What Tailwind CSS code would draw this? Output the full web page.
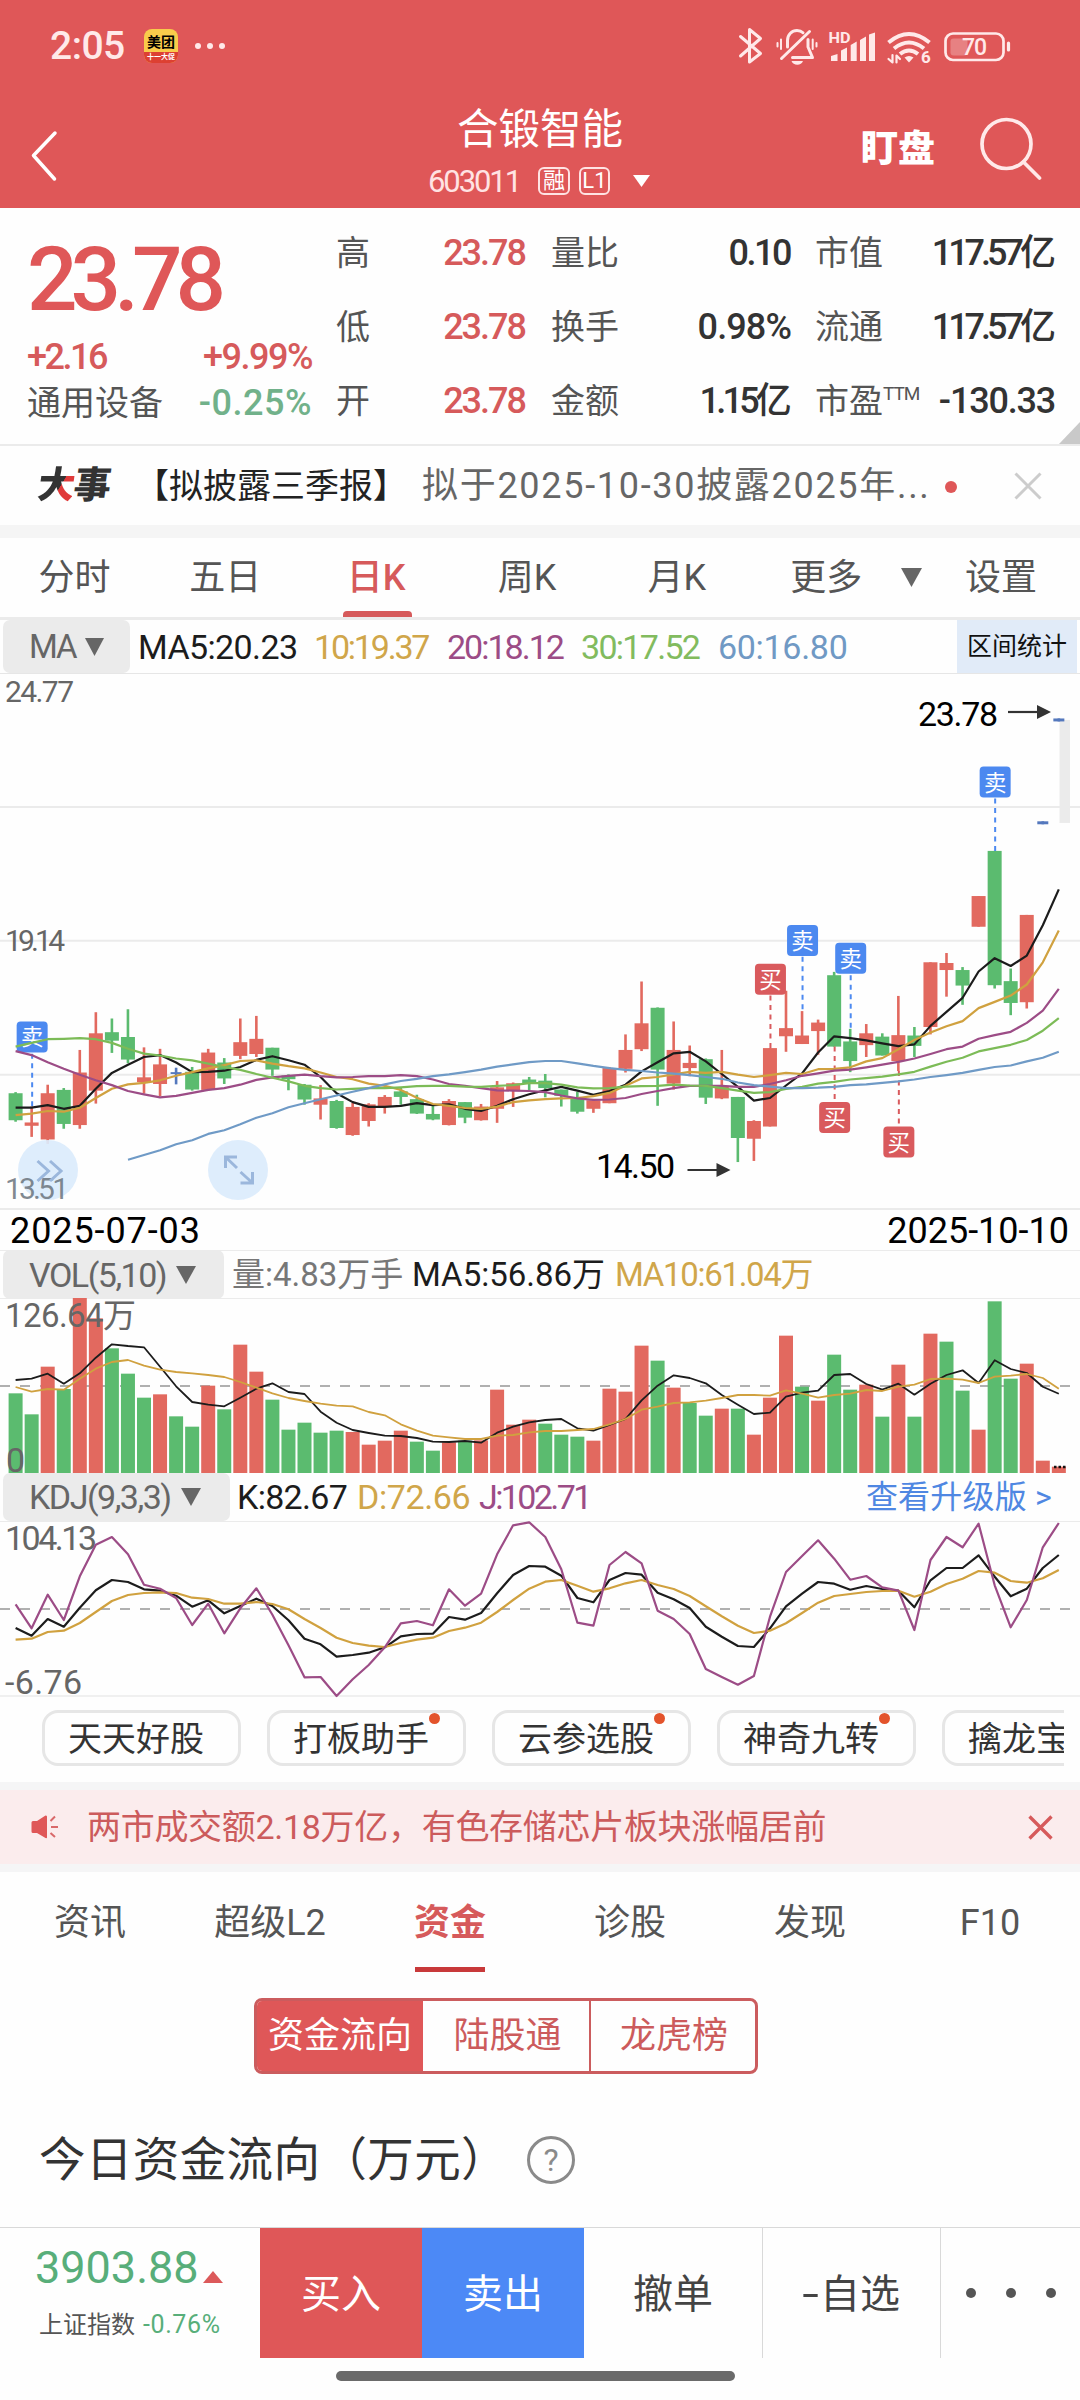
<!DOCTYPE html>
<html lang="zh-CN">
<head>
<meta charset="utf-8">
<title>合锻智能 603011</title>
<script src="https://cdn.jsdelivr.net/npm/@tailwindcss/browser@4"></script>
</head>
<body class="w-[1080px] h-[2400px] overflow-hidden bg-[#fefefe] text-[#555] font-['Roboto','Noto_Sans_CJK_SC',sans-serif] leading-none whitespace-nowrap">

<header class="h-[208px] bg-[#df5758] text-white">
  <div class="flex h-[92px] items-center pl-[50px] pr-[68px] text-[#ffe9e9]">
    <span class="w-[94px] text-[39px] font-medium tracking-[-0.5px]">2:05</span>
    <div class="flex h-[34px] w-[34px] flex-col overflow-hidden rounded-[8px] bg-[#f9cb4b] text-center">
      <span class="h-[23px] pt-[6px] text-[14px] font-bold text-black">美团</span>
      <span class="h-[11px] bg-[#dd4032] pt-[2px] text-[7px] font-bold text-white">十一大促</span>
    </div>
    <div class="ml-[17px] flex gap-[6px]">
      <i class="size-[6px] rounded-full bg-[#ffe9e9]"></i><i class="size-[6px] rounded-full bg-[#ffe9e9]"></i><i class="size-[6px] rounded-full bg-[#ffe9e9]"></i>
    </div>
    <svg class="ml-auto h-[40px] w-[277px]" viewBox="735 25 277 40" fill="none" stroke="#ffe9e9" stroke-width="3" stroke-linecap="round" stroke-linejoin="round">
      <path d="M740.5 35.5 760.5 52.5 749.5 61V28.5L760.5 37.5 740.5 55"/>
      <path d="M787.5 46v-6.500c0-6 4.500-10 9.500-10 2.500 0 4.600.8 6 2.200M781.500 57.500 809.500 30.500M808 38.500v7.500l4.500 10.500H792.500"/>
      <path d="M777.500 42v3.500M781 38.500v9.500M812.700 38.500v9.500M816.500 42v3.500" stroke-width="2"/>
      <path d="M791.500 60h11.500c-1 2.500-3 3.700-5.700 3.700s-4.800-1.200-5.800-3.700z" fill="#ffe9e9" stroke="none"/>
      <g fill="#ffe9e9" stroke="none">
        <path d="M831 55l6.500-2v7h-6.500zM841 49.500l6-3v13.500h-6zM850.700 44l6-3.500v19.500h-6zM860 39l6-3.500v24.500h-6zM869 33.500l6-2v28.500h-6z"/>
        <text x="828.500" y="41.500" font-size="15" font-weight="700" textLength="22" lengthAdjust="spacingAndGlyphs">HD</text>
        <path d="M904.500 56.500q4.500-3 9 0l-4.500 5z"/>
        <text x="921" y="62" font-size="17" font-weight="700">6</text>
      </g>
      <g stroke-width="4" stroke-linecap="butt">
        <path d="M888.500 41.500q20.500-17 41 0M894 47.500q15-12 30 0M900 53q9-7 18 0"/>
      </g>
      <path d="M892.500 54v7.500l-4-3.500M896.500 61.500v-7l3.500 3.500" stroke-width="2.200"/>
      <rect x="945.500" y="32.500" width="58" height="26.500" rx="7.500" stroke-width="2.700"/>
      <rect x="950.500" y="37.500" width="17" height="17" rx="3" fill="#fff" fill-opacity=".25" stroke="none"/>
      <path d="M1008.500 42v7" stroke-width="3.200"/>
      <text x="962" y="53.500" font-size="23" font-weight="500" fill="#ffe9e9" stroke="none" textLength="25">70</text>
    </svg>
  </div>
  <div class="flex h-[116px] justify-between pl-[30px] pr-[38px]">
    <svg class="mt-[38px] h-[52px] w-[320px]" viewBox="0 0 320 52" fill="none" stroke="#fff" stroke-width="3.500" stroke-linecap="round" stroke-linejoin="round"><path d="M25 3 3.500 25.500 24.500 49"/></svg>
    <div class="flex w-[380px] flex-col items-center pt-[17px]">
      <h1 class="text-[41.500px] leading-[42px]">合锻智能</h1>
      <div class="mt-[16px] flex h-[28px] items-center pr-[2px]">
        <span class="text-[31px] tracking-[-2.1px] text-[#ffe3e3]">603011</span>
        <span class="ml-[18px] flex h-[28px] w-[32px] items-center justify-center rounded-[6px] border-2 border-[#ffe3e3] text-[22px]">融</span>
        <span class="ml-[9px] flex h-[28px] w-[31px] items-center justify-center rounded-[6px] border-2 border-[#ffe3e3] text-[22px]">L1</span>
        <svg class="ml-[23px] h-[12px] w-[17px]" viewBox="0 0 17 12" fill="#fff"><path d="M0 0h17L8.500 12z"/></svg>
      </div>
    </div>
    <div class="flex w-[312px] justify-end pt-[25px]">
      <span class="mt-[14px] text-[37px] font-black">盯盘</span>
      <svg class="ml-[45px] h-[64px] w-[62px]" viewBox="980 117 62 64" fill="none" stroke="#ffe9e9" stroke-width="3.700" stroke-linecap="round"><circle cx="1006.500" cy="144" r="24.500"/><path d="M1023.500 162 1039.500 178"/></svg>
    </div>
  </div>
</header>

<section class="relative flex h-[238px] border-b-2 border-[#ebebeb] pl-[27px] pr-[26px]">
  <div class="w-[285px] pt-[24px]">
    <div class="text-[89px] font-medium leading-[96px] tracking-[-7px] text-[#df5758]">23.78</div>
    <div class="mt-[9px] flex h-[40px] items-center justify-between text-[36px] font-medium text-[#d65a5b]"><span class="tracking-[-2.500px]">+2.16</span><span class="tracking-[-1.500px]">+9.99%</span></div>
    <div class="mt-[6px] flex h-[40px] items-center justify-between text-[34px]"><span>通用设备</span><span class="text-[36px] font-medium tracking-[0.500px] text-[#71b18a]">-0.25%</span></div>
  </div>
  <div class="ml-[24px] w-[191px] pt-[8px]">
    <div class="flex h-[74px] items-center justify-between text-[34px]">高<b class="mr-[2px] text-[36px] font-medium tracking-[-2px] text-[#d65a5b]">23.78</b></div>
    <div class="flex h-[74px] items-center justify-between text-[34px]">低<b class="mr-[2px] text-[36px] font-medium tracking-[-2px] text-[#d65a5b]">23.78</b></div>
    <div class="flex h-[74px] items-center justify-between text-[34px]">开<b class="mr-[2px] text-[36px] font-medium tracking-[-2px] text-[#d65a5b]">23.78</b></div>
  </div>
  <div class="ml-[24px] w-[240px] pt-[8px]">
    <div class="flex h-[74px] items-center justify-between text-[34px]">量比<b class="mr-[1px] text-[36px] font-medium tracking-[-2.500px] text-[#333]">0.10</b></div>
    <div class="flex h-[74px] items-center justify-between text-[34px]">换手<b class="text-[36px] font-medium tracking-[-0.900px] text-[#333]">0.98%</b></div>
    <div class="flex h-[74px] items-center justify-between text-[34px]">金额<b class="mr-[3px] text-[36px] font-medium tracking-[-3.800px] text-[#333]">1.15亿</b></div>
  </div>
  <div class="ml-[24px] w-[239px] pt-[8px]">
    <div class="flex h-[74px] items-center justify-between text-[34px]">市值<b class="mr-[2px] text-[36px] font-medium tracking-[-4px] text-[#333]">117.57亿</b></div>
    <div class="flex h-[74px] items-center justify-between text-[34px]">流通<b class="mr-[2px] text-[36px] font-medium tracking-[-4px] text-[#333]">117.57亿</b></div>
    <div class="flex h-[74px] items-center justify-between text-[34px]"><span class="flex">市盈<i class="text-[19px] not-italic tracking-[-1px]">TTM</i></span><b class="-mr-[1px] text-[36px] font-medium tracking-[-1.200px] text-[#333]">-130.33</b></div>
  </div>
  <svg class="absolute bottom-0 right-0 h-[22px] w-[21px]" viewBox="0 0 21 22" fill="#c9c9c9"><path d="M21 0v22H0z"/></svg>
</section>

<section class="flex h-[79px] items-center pl-[38px]">
  <span class="w-[97px] skew-x-[-8deg] text-[37px] font-black tracking-[-1px] text-[#333]"><span class="bg-linear-[115deg,#333_58%,#e03a3a_59%] bg-clip-text text-transparent">大</span>事</span>
  <span class="w-[287px] text-[34px] text-[#222]">【拟披露三季报】</span>
  <span class="w-[526px] text-[36px] tracking-[1.700px] text-[#666]">拟于2025-10-30披露2025年...</span>
  <i class="mt-[2px] -ml-[3px] h-[12px] w-[12px] rounded-full bg-[#df5758]"></i>
  <svg class="ml-[57px] h-[28px] w-[28px]" viewBox="0 0 28 28" stroke="#ccc" stroke-width="3"><path d="M1.500 1.500 26.500 26.500M26.500 1.500 1.500 26.500"/></svg>
</section>

<nav class="flex h-[95px] border-b-[3px] border-t-[13px] border-b-[#ebebeb] border-t-[#f5f5f5] text-center text-[36px]">
  <span class="w-[149px] pt-[22px]">分时</span>
  <span class="w-[153px] pt-[22px]">五日</span>
  <span class="flex w-[151px] flex-col items-center justify-between pt-[22px] font-medium text-[#d65a5b]"><span class="-ml-[2px]">日K</span><i class="h-[6px] w-[69px] rounded-t-[4px] bg-[#d65a5b]"></i></span>
  <span class="w-[149px] pt-[22px]">周K</span>
  <span class="w-[151px] pt-[22px]">月K</span>
  <span class="w-[148px] pt-[22px]">更多</span>
  <svg class="ml-[1px] mt-[30px] h-[19px] w-[21px]" viewBox="0 0 21 19" fill="#666"><path d="M0 0h21L10.500 19z"/></svg>
  <span class="w-[158px] pt-[22px]">设置</span>
</nav>

<section class="flex h-[54px] items-center border-b border-[#e6e6e6] pl-[3px] pr-[3px] text-[34px]">
  <span class="flex h-[53px] w-[127px] items-center gap-[9px] rounded-[7px] bg-[#ebebeb] pl-[26px] text-[33px] tracking-[-2px] text-[#666]">MA<svg class="h-[18px] w-[19px]" viewBox="0 0 19 18" fill="#666"><path d="M0 0h19L9.500 18z"/></svg></span>
  <span class="ml-[8px] w-[176px] tracking-[-0.600px] text-[#1c1c1c]">MA5:20.23</span>
  <span class="w-[133px] tracking-[-2.200px] text-[#d0a64a]">10:19.37</span>
  <span class="w-[134px] tracking-[-2px] text-[#9c4c86]">20:18.12</span>
  <span class="w-[137px] tracking-[-1.700px] text-[#82bb5e]">30:17.52</span>
  <span class="tracking-[-0.300px] text-[#7099c4]">60:16.80</span>
  <span class="ml-auto flex h-[53px] w-[120px] items-center justify-center bg-[#e1ebf8] text-[25px] text-[#111]">区间统计</span>
</section>

<svg id="kline" class="block h-[536px] w-[1080px] overflow-visible" viewBox="0 0 1080 536"></svg>

<div class="flex h-[40px] items-center justify-between pl-[10px] pr-[11px] pt-[1px] text-[36px] text-black"><span class="tracking-[0.900px]">2025-07-03</span><span class="tracking-[0px]">2025-10-10</span></div>

<section class="flex h-[49px] items-center border-y border-[#ebebeb] pl-[3px] text-[33px]">
  <span class="flex h-[49px] w-[221px] shrink-0 items-center gap-[10px] rounded-[7px] bg-[#ebebeb] pl-[26px] text-[34px] tracking-[-1.500px] text-[#666]">VOL(5,10)<svg class="h-[18px] w-[20px]" viewBox="0 0 20 18" fill="#666"><path d="M0 0h20L10 18z"/></svg></span>
  <span class="ml-[8px] w-[180px] text-[#777]">量:4.83万手</span>
  <span class="w-[203px] text-[#1c1c1c]">MA5:56.86万</span>
  <span class="tracking-[-1.300px] text-[#d0a64a]">MA10:61.04万</span>
</section>
<svg id="volume" class="block h-[174px] w-[1080px] overflow-visible" viewBox="0 0 1080 174"></svg>

<section class="flex h-[49px] items-center border-b border-[#ebebeb] pl-[3px] pr-[28px] text-[34px]">
  <span class="flex h-[48px] w-[227px] shrink-0 items-center gap-[10px] rounded-[7px] bg-[#ebebeb] pl-[26px] tracking-[-1.500px] text-[#666]">KDJ(9,3,3)<svg class="h-[18px] w-[20px]" viewBox="0 0 20 18" fill="#666"><path d="M0 0h20L10 18z"/></svg></span>
  <span class="ml-[7px] w-[120px] tracking-[-0.700px] text-[#1c1c1c]">K:82.67</span>
  <span class="w-[122px] tracking-[-0.400px] text-[#d0a64a]">D:72.66</span>
  <span class="tracking-[-2.600px] text-[#9c4c86]">J:102.71</span>
  <span class="ml-auto text-[32px] tracking-[0.200px] text-[#4f87e2]">查看升级版 &gt;</span>
</section>
<svg id="kdj" class="block h-[175px] w-[1080px] overflow-visible" viewBox="0 0 1080 175"></svg>

<section class="mr-[16px] flex h-[85px] gap-[26px] overflow-hidden pl-[42px] pt-[13px] text-[34px] text-[#333]">
  <span class="relative flex h-[56px] w-[199px] shrink-0 items-center rounded-[16px] border-[3px] border-[#e6e6e6] pl-[23px] pt-[1px]">天天好股</span>
  <span class="relative flex h-[56px] w-[199px] shrink-0 items-center rounded-[16px] border-[3px] border-[#e6e6e6] pl-[23px] pt-[1px]">打板助手<i class="absolute right-[23px] top-0 size-[11px] rounded-full bg-[#e3532b]"></i></span>
  <span class="relative flex h-[56px] w-[199px] shrink-0 items-center rounded-[16px] border-[3px] border-[#e6e6e6] pl-[23px] pt-[1px]">云参选股<i class="absolute right-[23px] top-0 size-[11px] rounded-full bg-[#e3532b]"></i></span>
  <span class="relative flex h-[56px] w-[199px] shrink-0 items-center rounded-[16px] border-[3px] border-[#e6e6e6] pl-[23px] pt-[1px]">神奇九转<i class="absolute right-[23px] top-0 size-[11px] rounded-full bg-[#e3532b]"></i></span>
  <span class="relative flex h-[56px] w-[199px] shrink-0 items-center rounded-[16px] border-[3px] border-[#e6e6e6] pl-[23px] pt-[1px]">擒龙宝</span>
</section>

<section class="flex h-[90px] items-center border-y-8 border-[#f5f5f6] bg-[#fbeced] pl-[31px] pr-[27px] text-[#cc5b5c]">
  <svg class="h-[24px] w-[28px]" viewBox="0 0 28 24" fill="#df5758"><path d="M2 6h4L14.500.500q1.500 0 1.500 1v21q0 1-1.500.500L6 18H2q-1.500 0-1.500-1.500V7.500Q.500 6 2 6z"/><path d="M19.500 6 24 1.500M20 12h7M19.500 18 24 22" stroke="#d9696a" stroke-width="2" fill="none"/></svg>
  <span class="ml-[28px] text-[34px] tracking-[-0.300px]">两市成交额2.18万亿，有色存储芯片板块涨幅居前</span>
  <svg class="ml-auto h-[25px] w-[25px]" viewBox="0 0 25 25" stroke="#d65a5b" stroke-width="3.300"><path d="M1.500 1.500 23.500 23.500M23.500 1.500 1.500 23.500"/></svg>
</section>

<nav class="grid h-[100px] grid-cols-6 text-center text-[36px]">
  <span class="pt-[33px]">资讯</span>
  <span class="pt-[33px]">超级L2</span>
  <span class="flex flex-col items-center justify-between pt-[33px] font-bold text-[#d65a5b]">资金<i class="h-[5px] w-[70px] bg-[#c8393a]"></i></span>
  <span class="pt-[33px]">诊股</span>
  <span class="pt-[33px]">发现</span>
  <span class="pt-[33px]">F10</span>
</nav>

<div class="ml-[254px] mt-[26px] flex h-[76px] w-[504px] overflow-hidden rounded-[8px] border-[3px] border-[#cb5c5e] text-[36px] text-[#cc5b5c]">
  <span class="flex w-[166px] items-center justify-center bg-[#df5758] pb-[1px] text-white">资金流向</span>
  <span class="flex w-[168px] items-center justify-center border-r-2 border-[#cb5c5e] pb-[1px] pl-[3px]">陆股通</span>
  <span class="flex flex-1 items-center justify-center pb-[1px] pl-[2px]">龙虎榜</span>
</div>

<section class="flex h-[153px] items-center pb-[1px] pl-[39px] pt-[20px]">
  <h2 class="w-[488px] text-[46.500px] tracking-[0.400px] text-[#333]">今日资金流向（万元）</h2>
  <span class="flex size-[48px] items-center justify-center rounded-full border-[3px] border-[#8a8a8a] text-[32px] text-[#8a8a8a]">?</span>
</section>

<footer class="flex h-[131px] border-t border-[#d9d9d9] text-[40px]">
  <div class="w-[260px] pl-[35px] pt-[17px]">
    <div class="flex items-end text-[45px] text-[#58ae7a]">3903.88<svg class="mb-[7px] ml-[4px] h-[12px] w-[20px]" viewBox="0 0 20 12" fill="#dc595a"><path d="M10 0 20 12H0z"/></svg></div>
    <div class="mt-[22px] flex items-center gap-[8px] pl-[4px] text-[24px]"><span>上证指数</span><span class="text-[25px] tracking-[0.600px] text-[#58ae7a]">-0.76%</span></div>
  </div>
  <span class="flex w-[162px] items-center justify-center bg-[#df5758] pt-[3px] text-white">买入</span>
  <span class="flex w-[162px] items-center justify-center bg-[#4c89f6] pt-[3px] text-white">卖出</span>
  <span class="flex w-[179px] items-center justify-center border-r border-[#d9d9d9] pt-[3px] text-[#444]">撤单</span>
  <span class="flex w-[178px] items-center justify-center border-r border-[#d9d9d9] pt-[3px] pl-[2px] text-[#444]"><span class="mr-[4px] scale-x-150">-</span>自选</span>
  <span class="flex flex-1 items-center gap-[30px] pl-[25px]"><i class="size-[10px] rounded-full bg-[#555]"></i><i class="size-[10px] rounded-full bg-[#555]"></i><i class="size-[10px] rounded-full bg-[#555]"></i></span>
</footer>
<div class="flex h-[42px] items-center justify-center pr-[9px] pb-[7px]"><i class="h-[10px] w-[399px] rounded-full bg-[#6a6a6a]"></i></div>

<script>
const RED = '#e2695f', GREEN = '#5bbb6f', BLUE = '#5478bd';
const BLACK = '#1c1c1c', GOLD = '#d0a13f', PURPLE = '#9c4c86', LIME = '#7cbb57', SKY = '#6f9ac6';
const STEP = 16.05, X0 = 15.6;
const px = i => X0 + i * STEP;
const rect = (x, y, w, h, f, extra = '') => `<rect x="${x}" y="${y}" width="${w}" height="${h}" fill="${f}" ${extra}/>`;
const hline = (y, c = '#ebebeb', w = 2, extra = '') => `<path d="M0 ${y}H1080" stroke="${c}" stroke-width="${w}" ${extra}/>`;
const text = (x, y, size, len, s, fill = '#666') => `<text x="${x}" y="${y}" font-size="${size}" textLength="${len}" fill="${fill}">${s}</text>`;
const curve = (vals, y, color, w = 2.2, start = 0) =>
  `<polyline fill="none" stroke="${color}" stroke-width="${w}" stroke-linejoin="round" points="${vals.map((v, i) => px(i + start).toFixed(1) + ',' + y(v).toFixed(1)).join(' ')}"/>`;

/* Daily candles: colour, body top, body bottom, high, low */
const candles = [
 'g',1144,1217,1141,1221,'r',1223,1232,1180,1262,'r',1144,1269,1121,1281,'g',1135,1227,1130,1240,'r',1088,1230,1027,1240,'r',982,1137,925,1172,
 'g',979,1002,942,1035,'g',992,1053,917,1063,'r',1101,1114,1020,1145,'r',1066,1119,1024,1152,'b',1087,1092,1075,1120,'g',1086,1134,1073,1137,
 'r',1034,1135,1024,1137,'g',1061,1104,1049,1119,'r',1006,1043,942,1052,'r',997,1038,935,1046,'g',1021,1080,1021,1097,'g',1096,1106,1093,1136,
 'g',1121,1161,1119,1175,'r',1158,1175,1122,1215,'g',1165,1238,1162,1240,'r',1181,1257,1170,1259,'r',1174,1219,1171,1234,'r',1154,1181,1149,1199,
 'g',1139,1154,1130,1175,'g',1160,1199,1148,1200,'g',1200,1215,1178,1217,'r',1165,1230,1160,1231,'g',1168,1210,1168,1225,'r',1180,1217,1173,1218,
 'r',1128,1186,1111,1224,'r',1117,1136,1115,1181,'g',1107,1117,1100,1136,'g',1110,1130,1092,1155,'g',1134,1151,1134,1180,'g',1158,1194,1140,1199,
 'r',1163,1186,1160,1197,'r',1076,1171,1073,1171,'r',1027,1078,985,1088,'r',955,1025,842,1030,'g',913,1080,912,1178,'r',1027,1118,950,1134,
 'r',1062,1076,1015,1098,'g',1052,1156,1050,1173,'r',1125,1158,1027,1160,'g',1154,1265,1154,1330,'r',1219,1267,1217,1327,'r',1022,1234,1022,1234,
 'r',968,990,867,1032,'r',988,1011,922,1011,'r',953,976,945,1040,'g',825,1018,816,1018,'g',1004,1057,970,1087,'r',982,1014,957,1046,
 'g',991,1042,982,1042,'r',987,1057,881,1084,'g',988,1016,965,1046,'r',790,965,790,985,'r',792,811,765,883,'g',811,853,803,905,
 'r',611,694,611,694,'g',489,852,489,861,'g',841,900,807,933,'r',662,898,662,915,'b',409,417,409,417,'b',131,139,131,139];
const ma5 = [1183,1183,1176,1186,1178,1132,1089,1067,1046,1041,1061,1087,1086,1083,1073,1054,1044,1055,1067,1100,1144,1168,1181,1181,1178,1171,1176,1174,1186,1192,1178,1160,1147,1136,1127,1137,1148,1138,1121,1085,1060,1036,1032,1058,1092,1127,1164,1157,1123,1090,1034,990,995,1001,1009,1017,1012,962,924,886,815,779,800,772,690,593];
const ma10 = [1203,1199,1192,1194,1183,1157,1132,1120,1116,1109,1097,1087,1077,1068,1057,1055,1064,1071,1077,1088,1100,1106,1118,1124,1135,1156,1173,1178,1184,1186,1180,1168,1163,1160,1158,1157,1152,1143,1124,1104,1100,1093,1086,1089,1086,1094,1100,1095,1089,1092,1079,1078,1074,1058,1049,1025,1000,980,963,949,914,897,880,850,790,704];
const ma20 = [1030,1041,1060,1078,1094,1109,1122,1138,1147,1155,1151,1143,1135,1130,1121,1108,1101,1097,1094,1098,1101,1100,1098,1098,1095,1098,1107,1119,1124,1130,1136,1137,1138,1141,1150,1158,1162,1161,1157,1146,1138,1130,1124,1124,1124,1127,1127,1119,1109,1097,1090,1083,1080,1074,1067,1059,1050,1038,1025,1018,997,987,978,954,921,862];
const ma30 = [1018,1008,998,997,995,998,1008,1024,1037,1042,1050,1055,1064,1073,1081,1092,1102,1112,1124,1130,1134,1132,1130,1130,1128,1125,1124,1124,1126,1127,1124,1122,1117,1117,1121,1128,1131,1130,1126,1125,1124,1121,1123,1124,1130,1137,1143,1141,1132,1127,1118,1113,1107,1103,1099,1093,1086,1072,1059,1048,1031,1022,1013,1000,975,941];
const ma60 = [1324,1311,1298,1282,1271,1254,1244,1228,1210,1198,1182,1171,1160,1150,1140,1130,1120,1111,1105,1098,1093,1087,1080,1072,1066,1060,1057,1057,1063,1070,1076,1081,1084,1088,1091,1095,1100,1105,1115,1122,1126,1130,1130,1129,1127,1122,1120,1116,1112,1107,1100,1095,1089,1081,1073,1069,1058,1048,1032];

/* Price chart */
{
  const y = v => v / 2.703 - 4;
  let s = [370, 732, 1094, 1457].map(v => hline(y(v))).join('');
  s += rect(1059.5, y(135), 10.5, 103, '#ebebeb');
  for (let i = 0; i < 66; i++) {
    const [c, t, b, h, l] = candles.slice(i * 5, i * 5 + 5);
    const col = { r: RED, g: GREEN, b: BLUE }[c], w = c === 'b' ? 11 : 14, x = px(i);
    s += rect(x - 1.3, y(h), 2.6, (l - h) / 2.703, col) + rect(x - w / 2, y(t), w, (b - t) / 2.703, col);
  }
  const mark = (i, top, kind, d0, d1) => {
    const c = kind === '卖' ? '#4c89f0' : '#d95a5d', x = px(i) + 0.5;
    return `<path d="M${x} ${y(d0)}V${y(d1)}" stroke="${c}" stroke-width="2" stroke-dasharray="5 4.500"/>` +
      rect(x - 15.500, y(top), 31, 31, c, 'rx="4"') +
      `<text x="${x}" y="${y(top) + 24}" font-size="22.500" text-anchor="middle" fill="#fff">${kind}</text>`;
  };
  s += mark(1, 950, '卖', 1037, 1182) + mark(47, 794, '买', 880, 1022) + mark(49, 689, '卖', 775, 922) + mark(52, 737, '卖', 825, 970) +
       mark(61, 261, '卖', 347, 492) + mark(51, 1168, '买', 1018, 1168) + mark(55, 1234, '买', 1084, 1234);
  s += curve(ma5, y, BLACK) + curve(ma10, y, GOLD) + curve(ma20, y, PURPLE) + curve(ma30, y, LIME) + curve(ma60, y, SKY, 2.2, 7);
  s += text(918, 51.5, 34, 80, '23.78', '#000') + text(596, 504, 34, 79, '14.50', '#000');
  const arrow = (x, yy) => `<path d="M${x} ${yy}h32" stroke="#333" stroke-width="2.200"/><path d="M${x + 29} ${yy - 7}l14 7-14 7z" fill="#333"/>`;
  s += arrow(1008, 38) + arrow(687.5, 496);
  s += '<g fill="#dbebfc" fill-opacity=".92"><circle cx="48" cy="496" r="30"/><circle cx="238" cy="496" r="30"/></g>';
  s += text(5, 28, 30, 69, '24.77') + text(5, 277, 30, 60, '19.14') +
       '<text x="5" y="525" font-size="30" textLength="64" fill="#6b747d" fill-opacity=".85">13.51</text>';
  s += '<g fill="none" stroke="#9bb7dc" stroke-width="3"><path d="M37.500 487l11 10-11 10M50 487l11 10-11 10"/>' +
       '<path d="M225.500 494v-11h11.500M226 483.500l11 10.500M252.500 498v11H240.500M252 508.500l-11.500-10.500"/></g>';
  document.getElementById('kline').innerHTML = s;
}

/* Volume */
{
  const y = v => v / 3 - 59;
  const bars = '460g523g380r447g174r235r325g401g473g463r529g560g437r508g314r395r479g569g548g578g572g576r614r602r572r605g632g607r602g601r449r554r539r551g584g590g602r446r455r317r362g443r489g527g506r506g584r473r287r440g482r344g449g434r530g374r530g281r305g452g569r184g416g371r662r680r'.match(/\d+[gr]/g);
  const v5 = [420,416,401,431,400,353,313,318,322,380,439,486,494,499,473,446,430,456,462,515,548,570,579,587,588,594,605,606,603,608,578,560,547,540,537,565,572,555,537,481,437,406,414,430,465,494,522,518,470,458,452,405,402,432,449,431,464,431,405,391,429,361,387,399,440,461];
  const v10 = [441,455,447,449,416,386,366,360,377,389,396,400,405,411,426,443,460,474,483,491,497,499,516,526,553,572,587,592,597,597,587,585,577,573,573,570,567,553,537,509,500,489,487,482,474,465,465,467,451,461,473,465,461,450,453,440,434,417,416,419,429,410,407,402,414,446];
  let s = hline(y(438), '#b0b0b0', 2, 'stroke-dasharray="10 10"');
  bars.forEach((b, i) => { const t = y(parseInt(b)); s += rect(px(i) - 7, t, 14, 174 - t, b.endsWith('r') ? RED : GREEN); });
  s += curve(v5, y, BLACK, 1.800) + curve(v10, y, GOLD, 1.800);
  s += text(5, 28, 33, 131, '126.64万') + text(6, 173, 34, 19, '0');
  s += '<path d="M1054 168h12" stroke="#111" stroke-width="2.500" stroke-dasharray="2.500 2"/>';
  document.getElementById('volume').innerHTML = s;
}

/* KDJ */
{
  const y = v => v / 3 - 282;
  const k = [1164,1187,1137,1160,1103,1051,1020,1026,1048,1052,1067,1100,1081,1120,1098,1076,1098,1141,1196,1213,1250,1245,1238,1222,1189,1182,1181,1131,1139,1119,1060,1005,978,980,1007,1074,1087,1020,999,1004,1058,1078,1104,1160,1190,1218,1221,1165,1099,1061,1026,1031,1049,1038,1047,1052,1102,1021,984,984,946,1010,1069,1046,984,945];
  const d = [1199,1196,1176,1172,1149,1116,1083,1065,1059,1057,1059,1073,1077,1091,1091,1086,1092,1108,1137,1164,1193,1209,1217,1221,1209,1199,1193,1173,1163,1148,1116,1080,1046,1025,1020,1037,1055,1045,1030,1020,1035,1047,1068,1099,1129,1157,1179,1172,1150,1119,1088,1068,1062,1056,1053,1052,1070,1055,1032,1016,993,998,1023,1028,1015,990];
  const j = [1093,1165,1064,1140,1009,914,891,943,1034,1046,1074,1155,1091,1180,1105,1045,1124,1216,1312,1311,1368,1318,1275,1222,1150,1143,1156,1048,1097,1061,943,856,847,891,988,1148,1157,975,936,970,1112,1137,1182,1287,1311,1334,1308,1130,996,948,901,956,1019,1008,1042,1052,1170,960,891,922,851,1036,1162,1080,922,849];
  let s = hline(y(1107), '#b0b0b0', 2, 'stroke-dasharray="10 10"') + hline(174, '#ebebeb', 1.500);
  s += text(5, 28, 34, 92, '104.13') + text(5, 172, 34, 77, '-6.76');
  s += curve(k, y, BLACK) + curve(d, y, GOLD) + curve(j, y, PURPLE);
  document.getElementById('kdj').innerHTML = s;
}
</script>
</body>
</html>
